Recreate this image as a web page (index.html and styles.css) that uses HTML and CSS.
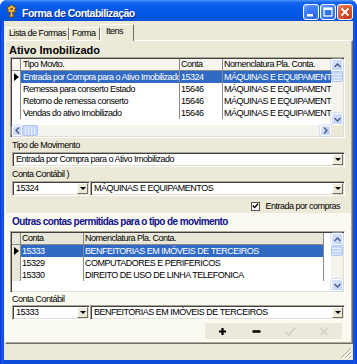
FILE: index.html
```html
<!DOCTYPE html>
<html lang="pt-BR">

<head>
    <meta charset="UTF-8">
    <meta name="viewport" content="width=device-width, initial-scale=1.0">
    <title>Forma de Contabilização</title>
    <link rel="stylesheet" href="styles.css">
</head>

<body>
    <div class="window">
        <!-- Title bar -->
        <div class="titlebar">
            <svg class="app-icon" width="13" height="14" viewBox="0 0 13 14">
                <path d="M6.5 1 L11 4 L9.5 6 L11 8 L7.5 8 L8.5 13 L4.5 13 L5.5 8 L2 8 L3.5 6 L2 4 Z" fill="#F2C24A" stroke="#7A4A12" stroke-width="1" stroke-linejoin="round" />
                <circle cx="6.5" cy="5" r="1.3" fill="#7A4A12" />
            </svg>
            <span class="title">Forma de Contabilização</span>
            <div class="caption-buttons">
                <span class="cap-btn">
                    <svg width="14" height="14" viewBox="0 0 14 14"><rect x="3" y="9" width="6" height="2.5" fill="#fff" /></svg>
                </span>
                <span class="cap-btn">
                    <svg width="14" height="14" viewBox="0 0 14 14"><rect x="3" y="3" width="8" height="8" fill="none" stroke="#fff" stroke-width="1.2" /><rect x="3" y="3" width="8" height="2" fill="#fff" /></svg>
                </span>
                <span class="cap-btn cap-close">
                    <svg width="14" height="14" viewBox="0 0 14 14"><path d="M3.5 3.5 L10.5 10.5 M10.5 3.5 L3.5 10.5" stroke="#fff" stroke-width="1.8" /></svg>
                </span>
            </div>
        </div>

        <div class="client">
            <!-- Tabs -->
            <div class="tabs">
                <div class="tab tab-lista">Lista de Formas</div>
                <div class="tab tab-forma">Forma</div>
                <div class="tab tab-itens active">Itens</div>
            </div>

            <div class="sheet">
                <div class="upper">
                    <h2 class="section-title">Ativo Imobilizado</h2>

                    <div class="grid grid-movto">
                        <div class="grid-body">
                            <div class="grid-row grid-head">
                                <div class="cell ind"></div>
                                <div class="cell c-tipo">Tipo Movto.</div>
                                <div class="cell c-conta">Conta</div>
                                <div class="cell c-nome">Nomenclatura Pla. Conta.</div>
                            </div>
                            <div class="grid-row selected">
                                <div class="cell ind"><span class="arrow"></span></div>
                                <div class="cell c-tipo">Entrada por Compra para o Ativo Imobilizado</div>
                                <div class="cell c-conta">15324</div>
                                <div class="cell c-nome">MÁQUINAS E EQUIPAMENTOS</div>
                            </div>
                            <div class="grid-row">
                                <div class="cell ind"></div>
                                <div class="cell c-tipo">Remessa para conserto Estado</div>
                                <div class="cell c-conta">15646</div>
                                <div class="cell c-nome">MÁQUINAS E EQUIPAMENTOS</div>
                            </div>
                            <div class="grid-row">
                                <div class="cell ind"></div>
                                <div class="cell c-tipo">Retorno de remessa conserto</div>
                                <div class="cell c-conta">15646</div>
                                <div class="cell c-nome">MÁQUINAS E EQUIPAMENTOS</div>
                            </div>
                            <div class="grid-row">
                                <div class="cell ind"></div>
                                <div class="cell c-tipo">Vendas do ativo Imobilizado</div>
                                <div class="cell c-conta">15646</div>
                                <div class="cell c-nome">MÁQUINAS E EQUIPAMENTOS</div>
                            </div>
                        </div>
                        <div class="vscroll">
                            <span class="sb-btn"><svg width="7" height="5" viewBox="0 0 7 5"><path d="M0.5 4 L3.5 1 L6.5 4" fill="none" stroke="#4D6185" stroke-width="1.5" /></svg></span>
                            <span class="sb-thumb"></span>
                            <span class="sb-track"></span>
                            <span class="sb-btn"><svg width="7" height="5" viewBox="0 0 7 5"><path d="M0.5 1 L3.5 4 L6.5 1" fill="none" stroke="#4D6185" stroke-width="1.5" /></svg></span>
                        </div>
                        <div class="hscroll">
                            <span class="sb-btn sb-left"><svg width="5" height="7" viewBox="0 0 5 7"><path d="M4 0.5 L1 3.5 L4 6.5" fill="none" stroke="#4D6185" stroke-width="1.5" /></svg></span>
                            <span class="sb-thumb sb-hthumb"></span>
                            <span class="sb-track"></span>
                            <span class="sb-btn sb-right"><svg width="5" height="7" viewBox="0 0 5 7"><path d="M1 0.5 L4 3.5 L1 6.5" fill="none" stroke="#4D6185" stroke-width="1.5" /></svg></span>
                        </div>
                        <div class="corner"></div>
                    </div>

                    <div class="field-label">Tipo de Movimento</div>
                    <div class="combo combo-full">
                        <span class="combo-text">Entrada por Compra para o Ativo Imobilizado</span>
                        <span class="combo-btn"><span class="tri"></span></span>
                    </div>

                    <div class="field-label">Conta Contábil )</div>
                    <div class="combo-row">
                        <div class="combo combo-small">
                            <span class="combo-text">15324</span>
                            <span class="combo-btn"><span class="tri"></span></span>
                        </div>
                        <div class="combo combo-wide">
                            <span class="combo-text">MÁQUINAS E EQUIPAMENTOS</span>
                            <span class="combo-btn"><span class="tri"></span></span>
                        </div>
                    </div>

                    <div class="check-row">
                        <span class="checkbox">
                            <svg width="8" height="8" viewBox="0 0 8 8"><path d="M1 3.5 L3 5.8 L7 1.5" fill="none" stroke="#000" stroke-width="1.6" /></svg>
                        </span>
                        <span>Entrada por compras</span>
                    </div>
                </div>

                <!-- Other accounts panel -->
                <div class="lower">
                    <h3 class="lower-title">Outras contas permitidas para o tipo de movimento</h3>

                    <div class="grid grid-contas">
                        <div class="grid-body">
                            <div class="grid-row grid-head">
                                <div class="cell ind"></div>
                                <div class="cell c-conta2">Conta</div>
                                <div class="cell c-nome2">Nomenclatura Pla. Conta.</div>
                                <div class="cell c-fill"></div>
                            </div>
                            <div class="grid-row selected">
                                <div class="cell ind"><span class="arrow"></span></div>
                                <div class="cell c-conta2">15333</div>
                                <div class="cell c-nome2">BENFEITORIAS EM IMÓVEIS DE TERCEIROS</div>
                                <div class="cell c-fill"></div>
                            </div>
                            <div class="grid-row">
                                <div class="cell ind"></div>
                                <div class="cell c-conta2">15329</div>
                                <div class="cell c-nome2">COMPUTADORES E PERIFERICOS</div>
                                <div class="cell c-fill"></div>
                            </div>
                            <div class="grid-row">
                                <div class="cell ind"></div>
                                <div class="cell c-conta2">15330</div>
                                <div class="cell c-nome2">DIREITO DE USO DE LINHA TELEFONICA</div>
                                <div class="cell c-fill"></div>
                            </div>
                        </div>
                        <div class="vscroll">
                            <span class="sb-btn"><svg width="7" height="5" viewBox="0 0 7 5"><path d="M0.5 4 L3.5 1 L6.5 4" fill="none" stroke="#4D6185" stroke-width="1.5" /></svg></span>
                            <span class="sb-thumb"></span>
                            <span class="sb-track"></span>
                            <span class="sb-btn"><svg width="7" height="5" viewBox="0 0 7 5"><path d="M0.5 1 L3.5 4 L6.5 1" fill="none" stroke="#4D6185" stroke-width="1.5" /></svg></span>
                        </div>
                    </div>

                    <div class="field-label field-label-tight">Conta Contábil</div>
                    <div class="combo-row">
                        <div class="combo combo-small">
                            <span class="combo-text">15333</span>
                            <span class="combo-btn"><span class="tri"></span></span>
                        </div>
                        <div class="combo combo-wide">
                            <span class="combo-text">BENFEITORIAS EM IMÓVEIS DE TERCEIROS</span>
                            <span class="combo-btn"><span class="tri"></span></span>
                        </div>
                    </div>

                    <div class="toolbar">
                        <span class="tool-btn">
                            <svg width="9" height="9" viewBox="0 0 9 9"><path d="M4.5 1 V8 M1 4.5 H8" stroke="#000" stroke-width="2.2" /></svg>
                        </span>
                        <span class="tool-btn">
                            <svg width="9" height="9" viewBox="0 0 9 9"><path d="M0.5 4.5 H8.5" stroke="#000" stroke-width="2.4" /></svg>
                        </span>
                        <span class="tool-btn">
                            <svg width="11" height="9" viewBox="0 0 11 9"><path d="M1 5 L4 8 L10 1" fill="none" stroke="#CFCDC0" stroke-width="1.5" /></svg>
                        </span>
                        <span class="tool-btn">
                            <svg width="10" height="9" viewBox="0 0 10 9"><path d="M1.5 1 L8.5 8 M8.5 1 L1.5 8" stroke="#CFCDC0" stroke-width="1.2" /><path d="M2.5 1 L9 7.5" stroke="#E4E2D6" stroke-width="0.8" /></svg>
                        </span>
                    </div>
                </div>
            </div>

            <div class="statusbar">
                <svg class="grip" width="12" height="12" viewBox="0 0 12 12">
                    <path d="M11 1 L1 11 M11 5 L5 11 M11 9 L9 11" stroke="#ACA899" stroke-width="1" />
                    <path d="M12 2 L2 12 M12 6 L6 12 M12 10 L10 12" stroke="#fff" stroke-width="1" />
                </svg>
            </div>
        </div>
    </div>
</body>

</html>
```

FILE: styles.css
```css
* {
    box-sizing: border-box;
    margin: 0;
    padding: 0;
}

body {
    width: 357px;
    height: 364px;
    overflow: hidden;
    font-family: "Liberation Sans", Arial, sans-serif;
    font-size: 9px;
    letter-spacing: -0.5px;
    color: #000;
    background: #fff;
}

.window {
    width: 357px;
    height: 364px;
    display: flex;
    flex-direction: column;
    background: linear-gradient(to right, #0831D9, #1B5BE6 2px, #0D4BD9 4px, #0D4BD9 353px, #1B5BE6 355px, #0831D9);
    border-radius: 7px 7px 0 0;
    overflow: hidden;
    padding-bottom: 4px;
}

/* Title bar */
.titlebar {
    height: 21px;
    flex-shrink: 0;
    display: flex;
    align-items: flex-start;
    padding: 0 4px 0 5px;
    background: linear-gradient(#4C94FA 0%, #1566EE 12%, #0659E8 40%, #0356E4 70%, #0250D8 100%);
    color: #fff;
}

.app-icon {
    margin-top: 4px;
    margin-right: 4px;
}

.title {
    margin-top: 5px;
    line-height: 16px;
    font-size: 10.5px;
    font-weight: bold;
    text-shadow: 1px 1px 0 #0A2A8A;
    flex: 1;
}

.caption-buttons {
    display: flex;
    gap: 1px;
    margin-top: 4px;
}

.cap-btn {
    width: 16px;
    height: 16px;
    border: 1px solid #fff;
    border-radius: 3px;
    background: radial-gradient(circle at 70% 80%, #2A64E8, #3E80F5 60%, #7AA6F8);
    display: flex;
    align-items: center;
    justify-content: center;
}

.cap-close {
    background: radial-gradient(circle at 70% 80%, #C4391A, #E05A35 60%, #F0977A);
}

/* Client area */
.client {
    flex: 1;
    margin: 0 4px;
    background: #ECE9D8;
    display: flex;
    flex-direction: column;
}

.tabs {
    height: 19px;
    flex-shrink: 0;
    display: flex;
    align-items: flex-end;
    padding-left: 2px;
}

.tab {
    height: 13px;
    line-height: 11px;
    border: 1px solid #fff;
    border-right-color: #716F64;
    border-bottom: none;
    padding-left: 2px;
    white-space: nowrap;
}

.tab-lista {
    width: 63px;
}

.tab-forma {
    width: 31px;
}

.tab-itens {
    width: 34px;
}

.tab.active {
    height: 17px;
    margin-bottom: -1px;
    padding-top: 1px;
    padding-left: 5px;
    background: #ECE9D8;
    position: relative;
    z-index: 1;
}

.sheet {
    height: 304px;
    margin-left: 1px;
    width: 348px;
    border-top: 1px solid #fff;
    border-left: 1px solid #fff;
    border-right: 1px solid #716F64;
    border-bottom: 1px solid #716F64;
    padding-right: 1px;
    padding-bottom: 1px;
    box-shadow: inset -1px -1px 0 #ACA899;
    display: flex;
    flex-direction: column;
}

.upper {
    height: 172px;
    flex-shrink: 0;
}

.section-title {
    margin: 3px 0 0 3px;
    font-size: 11px;
    font-weight: bold;
    letter-spacing: 0;
    line-height: 13px;
}

/* Data grids */
.grid {
    margin-left: 4px;
    width: 335px;
    border: 1px solid;
    border-color: #ACA899 #fff #fff #ACA899;
    padding: 1px;
    box-shadow: inset 1px 1px 0 #404040, inset -1px -1px 0 #E2DFD0;
    display: grid;
    grid-template-columns: 319px 12px;
}

.grid-movto {
    height: 81px;
    grid-template-rows: 66px 11px;
}

.grid-contas {
    height: 62px;
    margin-top: 3px;
    grid-template-rows: 58px;
}

.grid-body {
    background: #fff;
    overflow: hidden;
}

.grid-row {
    display: flex;
    height: 12px;
    line-height: 12px;
}

.cell {
    flex-shrink: 0;
    white-space: nowrap;
    overflow: hidden;
    padding-left: 1px;
    border-right: 1px solid #8A8A8A;
}

.grid-head {
    line-height: 11px;
}

.grid-head .cell {
    border-bottom: 1px solid #8A8A8A;
}

.grid-movto .grid-head {
    background: #F6F5F0;
}

.grid-contas .grid-head .cell,
.grid-contas .ind {
    background: #E8E6D8;
}

.ind {
    width: 9px;
    position: relative;
}

.c-tipo {
    width: 159px;
    padding-left: 2px;
}

.c-conta {
    width: 43px;
}

.c-nome {
    width: 108px;
    border-right: none;
}

.c-conta2 {
    width: 63px;
}

.c-nome2 {
    width: 240px;
}

.grid-contas .grid-head .c-fill,
.c-fill {
    width: 7px;
    border: none;
    background: #fff;
}

.selected .cell:not(.ind):not(.c-fill) {
    background: #316AC5;
    color: #fff;
}

.arrow {
    position: absolute;
    left: 2px;
    top: 2px;
    border-left: 5px solid #000;
    border-top: 4px solid transparent;
    border-bottom: 4px solid transparent;
}

/* Scrollbars */
.vscroll,
.hscroll {
    display: flex;
    background: #F4F3EE;
}

.vscroll {
    flex-direction: column;
}

.sb-btn {
    flex-shrink: 0;
    height: 12px;
    display: flex;
    align-items: center;
    justify-content: center;
    background: linear-gradient(135deg, #DCE6FD, #BDD0FA);
    border: 1px solid #fff;
    border-radius: 2px;
    box-shadow: 0 0 0 0.5px #B4C8F4;
}

.sb-thumb {
    flex-shrink: 0;
    height: 11px;
    background: repeating-linear-gradient(#C5D5FC 0 2px, #E4ECFE 2px 3px);
    border: 1px solid #B0C6F4;
    border-radius: 2px;
}

.sb-track {
    flex: 1;
}

.hscroll .sb-btn {
    height: auto;
}

.sb-left {
    width: 10px;
}

.sb-right {
    width: 11px;
}

.sb-hthumb {
    height: auto;
    width: 16px;
    background: repeating-linear-gradient(to right, #C5D5FC 0 2px, #E4ECFE 2px 3px);
}

.corner {
    background: #ECE9D8;
}

/* Combos */
.field-label {
    margin: 1px 0 0 6px;
    line-height: 13px;
}

.field-label-tight {
    line-height: 11px;
}

.combo {
    height: 15px;
    border: 1px solid;
    border-color: #ACA899 #fff #fff #ACA899;
    padding: 1px;
    box-shadow: inset 1px 1px 0 #404040, inset -1px -1px 0 #E2DFD0;
    background: #fff;
    display: flex;
}

.combo-full {
    margin-left: 6px;
    width: 333px;
}

.combo-row {
    display: flex;
    margin-left: 6px;
}

.combo-small {
    width: 78px;
}

.combo-wide {
    width: 255px;
}

.combo-text {
    flex: 1;
    padding-left: 2px;
    line-height: 11px;
    white-space: nowrap;
    overflow: hidden;
}

.combo-btn {
    width: 11px;
    flex-shrink: 0;
    background: #ECE9D8;
    border: 1px solid;
    border-color: #fff #716F64 #716F64 #fff;
    display: flex;
    align-items: center;
    justify-content: center;
}

.tri {
    border-top: 3px solid #000;
    border-left: 3px solid transparent;
    border-right: 3px solid transparent;
}

.check-row {
    display: flex;
    justify-content: flex-end;
    align-items: center;
    gap: 5px;
    margin-top: 5px;
    padding-right: 11px;
    line-height: 10px;
}

.checkbox {
    width: 9px;
    height: 9px;
    border: 1px solid #555;
    background: #fff;
    display: flex;
    align-items: center;
    justify-content: center;
}

/* Lower panel */
.lower {
    flex: 1;
    background: #FBFAF0;
    padding-top: 2px;
}

.lower-title {
    margin-left: 6px;
    font-size: 10px;
    font-weight: bold;
    letter-spacing: -0.6px;
    line-height: 13px;
    color: #10108C;
}

.toolbar {
    margin: 3px 0 0 199px;
    width: 137px;
    height: 16px;
    background: #EBE9DC;
    display: flex;
}

.tool-btn {
    width: 34px;
    display: flex;
    align-items: center;
    justify-content: center;
}

/* Status bar */
.statusbar {
    flex: 1;
    display: flex;
    justify-content: flex-end;
    align-items: flex-end;
}

.grip {
    margin: 0 1px 1px 0;
}
```
